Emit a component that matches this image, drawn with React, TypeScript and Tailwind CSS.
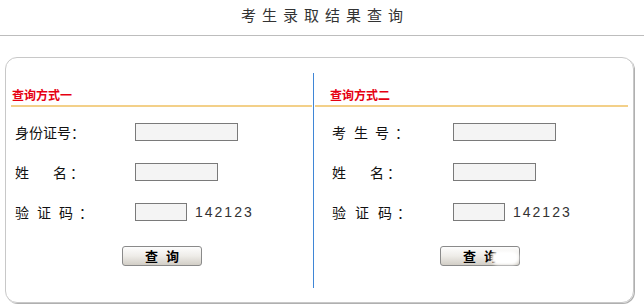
import React from 'react';

type Row = { chars: string[]; gaps: number[]; inputW: number; code?: boolean };

const LEFT_ROWS: Row[] = [
  { chars: ['身', '份', '证', '号', '：'], gaps: [0, 0, 0, 0], inputW: 103 },
  { chars: ['姓', '名', '：'], gaps: [24, 3], inputW: 83 },
  { chars: ['验', '证', '码', '：'], gaps: [8, 8, 6], inputW: 52, code: true },
];

const RIGHT_ROWS: Row[] = [
  { chars: ['考', '生', '号', '：'], gaps: [8, 7, 6], inputW: 103 },
  { chars: ['姓', '名', '：'], gaps: [24, 3], inputW: 83 },
  { chars: ['验', '证', '码', '：'], gaps: [9, 9, 5], inputW: 52, code: true },
];

const Label = ({ chars, gaps }: { chars: string[]; gaps: number[] }) => (
  <div className="flex items-center text-[14px] leading-[18px] text-[#111]">
    {chars.map((c, i) => (
      <span key={i} style={{ marginLeft: i === 0 ? 0 : gaps[i - 1] }}>{c}</span>
    ))}
  </div>
);

const Section = ({ title, rows, labelW, headerPad, rowPad, btnLeft, glitch }: {
  title: string; rows: Row[]; labelW: number; headerPad: string; rowPad: string; btnLeft: string; glitch?: boolean;
}) => (
  <div className="flex flex-col">
    <div className={`mt-[14px] ${headerPad} pb-[2px] border-b-2 border-[#f3d089] text-[12px] leading-[16px] font-bold text-[#e60012]`}>
      {title}
    </div>
    <div className={`flex flex-col gap-[22px] mt-[16px] ${rowPad}`}>
      {rows.map((r, i) => (
        <div key={i} className="flex items-center h-[18px]">
          <div style={{ width: labelW }} className="shrink-0">
            <Label chars={r.chars} gaps={r.gaps} />
          </div>
          <div style={{ width: r.inputW }} className="h-[18px] border border-[#7a7a7a] bg-[#f4f4f4]" />
          {r.code && (
            <span className="ml-[8px] text-[14px] tracking-[2px] text-[#333] font-['Liberation_Sans',sans-serif]">142123</span>
          )}
        </div>
      ))}
    </div>
    <div className={`${btnLeft} mt-[25px] relative w-[80px] h-[20px] rounded-[3px] border border-[#8a8a8a] bg-gradient-to-b from-[#fdfdfd] via-[#eeece8] to-[#d2cec6] flex items-center justify-center text-[13px] font-bold text-black tracking-[8px] pl-[8px]`}>
      查询
      {glitch && (
        <div className="absolute left-[50px] top-[4px] w-[28px] h-[14px] rounded-full bg-white blur-[1.5px]" />
      )}
    </div>
  </div>
);

export default function App() {
  return (
    <div className="w-[644px] h-[308px] bg-white overflow-hidden font-['Noto_Sans_CJK_SC','Liberation_Sans',sans-serif]">
      <div className="h-[36px] border-b border-[#bdbdbd] pt-[6px] pl-[6px] text-center text-[15px] leading-[18px] tracking-[6px] text-[#333]">
        考生录取结果查询
      </div>
      <div className="mt-[21px] ml-[5px] w-[629px] h-[246px] rounded-[12px] border border-[#c8c8c8] shadow-[1px_1px_0_#b0b0b0] pt-[15px] pb-[14px] flex">
        <div className="w-[307px] pl-[5px] pr-[1px]">
          <Section title="查询方式一" rows={LEFT_ROWS} labelW={120} headerPad="pl-[1px]" rowPad="pl-[4px]" btnLeft="ml-[111px]" />
        </div>
        <div className="w-px bg-[#3f86d6]" />
        <div className="flex-1 pl-[1px] pr-[5px]">
          <Section title="查询方式二" rows={RIGHT_ROWS} labelW={121} headerPad="pl-[15px]" rowPad="pl-[17px]" btnLeft="ml-[125px]" glitch />
        </div>
      </div>
    </div>
  );
}
